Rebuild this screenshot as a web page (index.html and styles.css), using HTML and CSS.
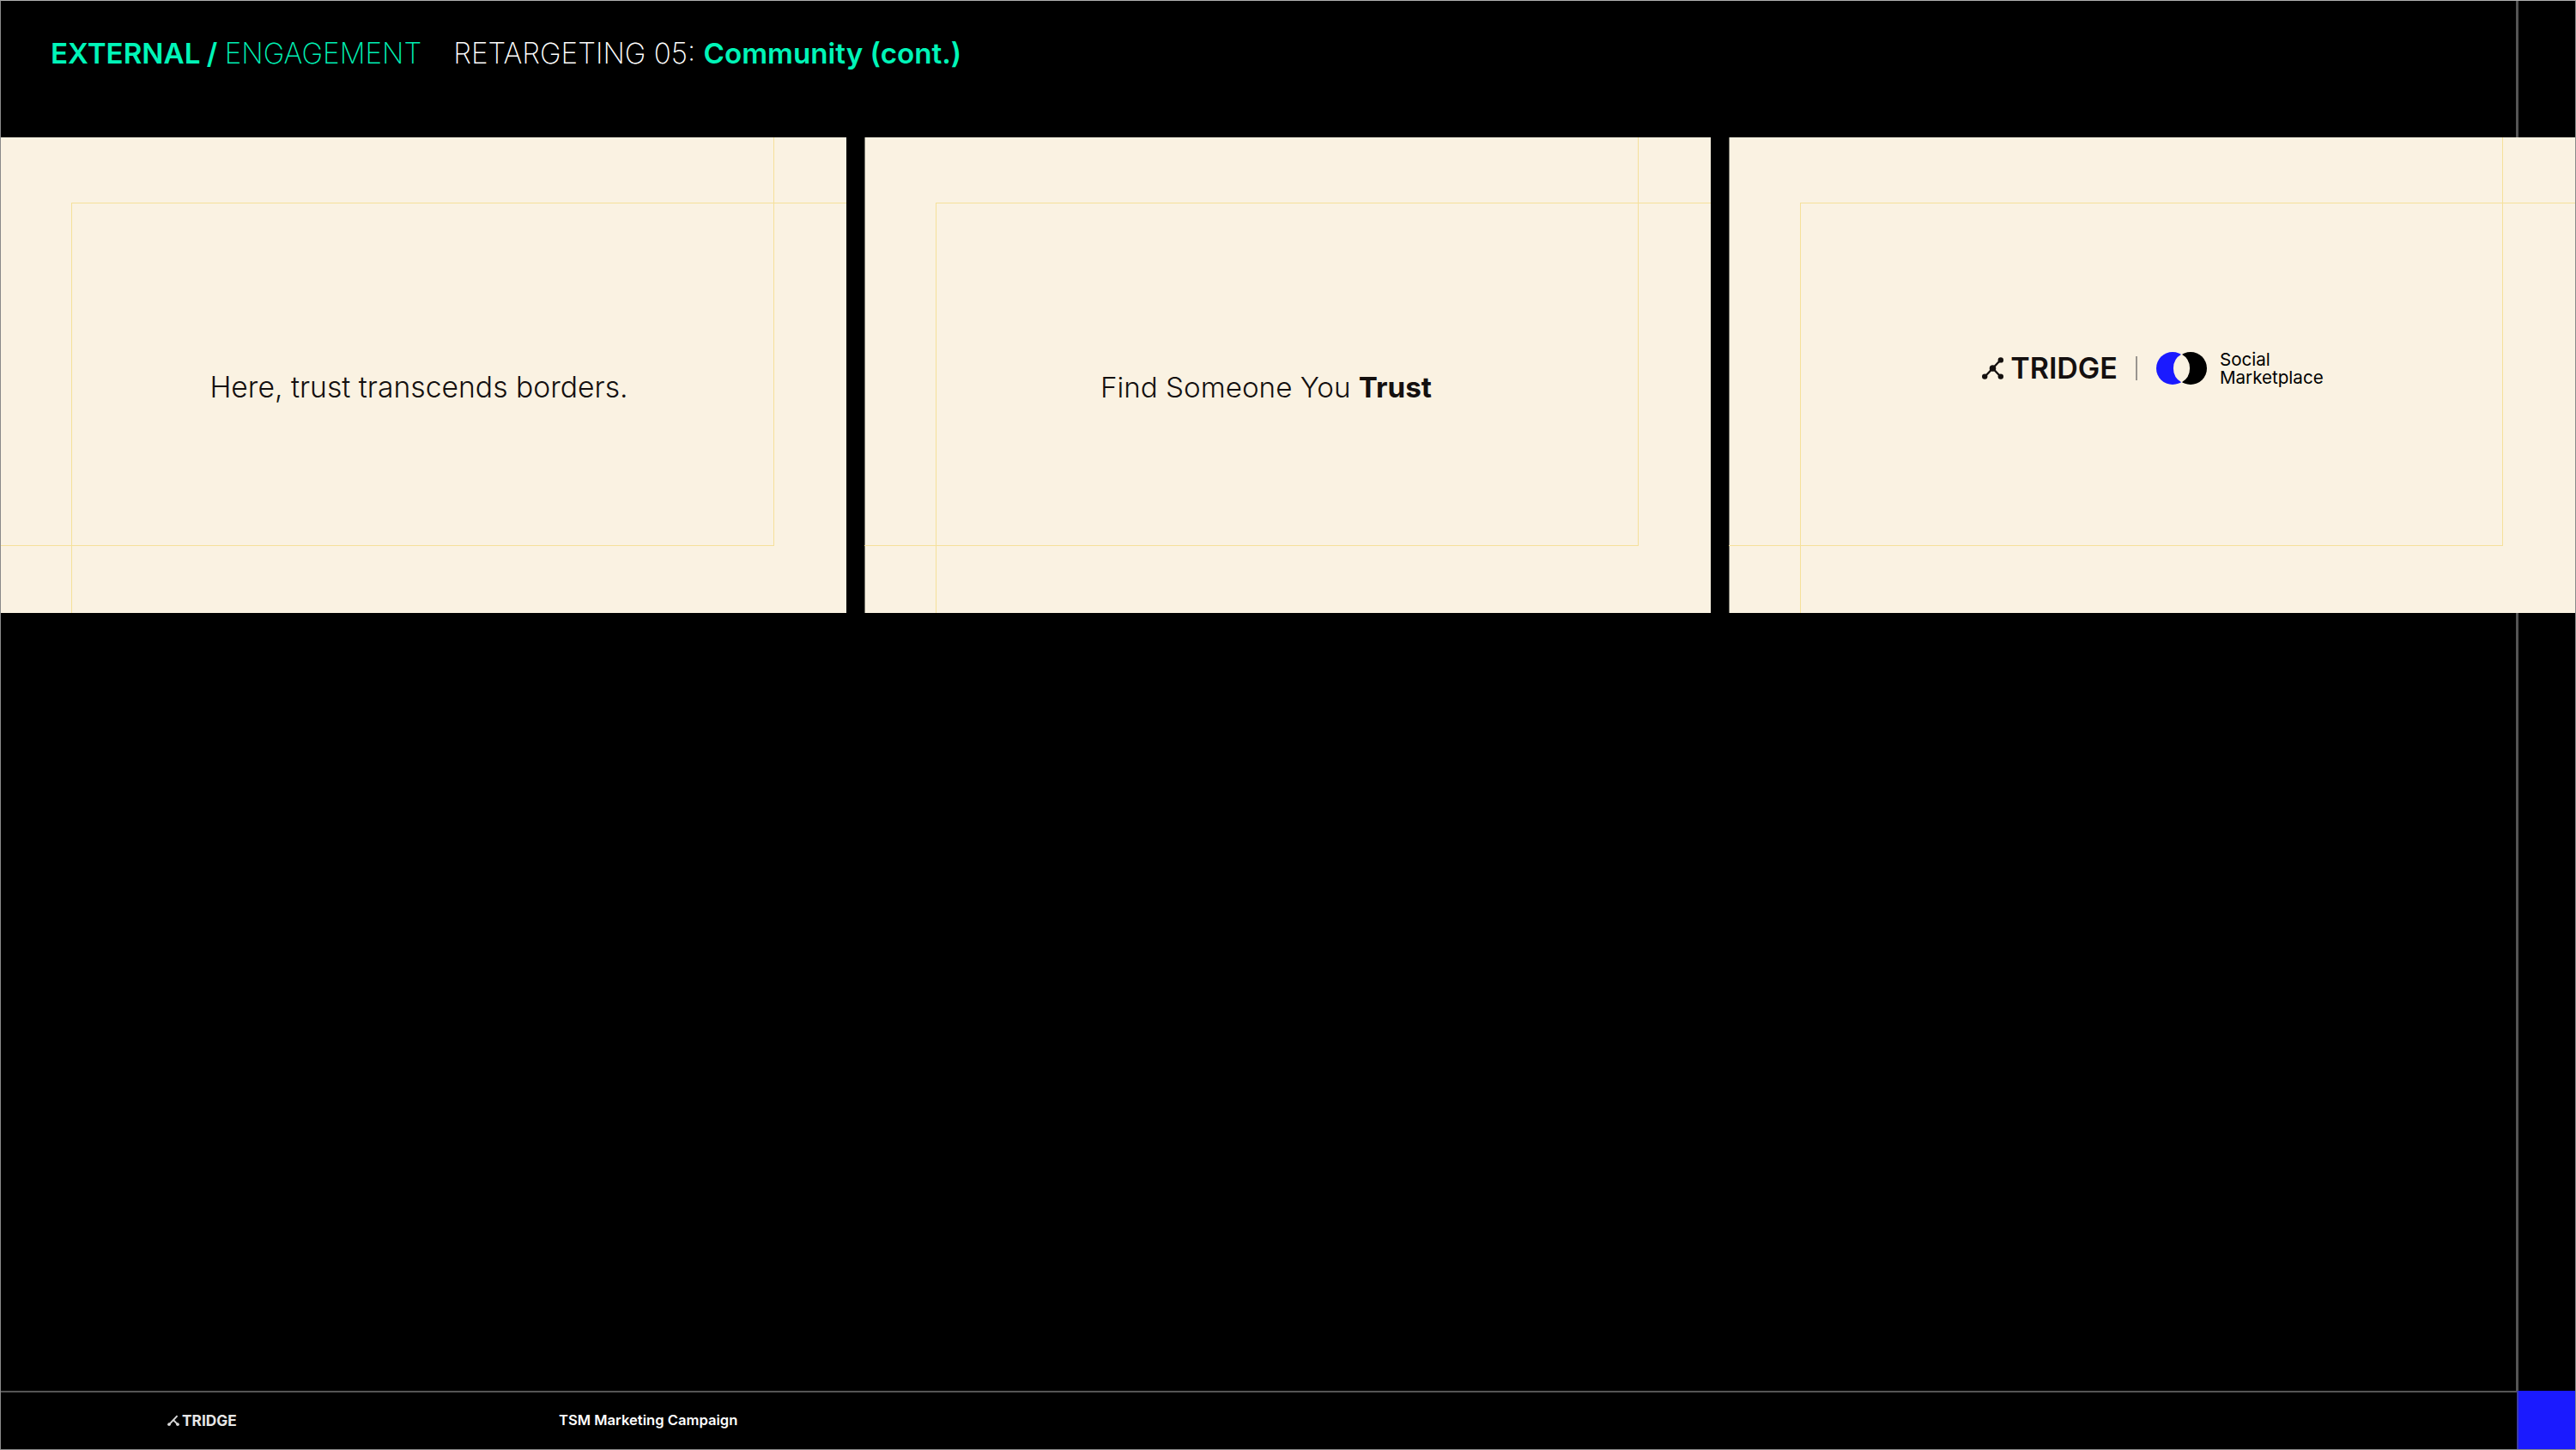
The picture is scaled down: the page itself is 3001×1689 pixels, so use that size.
FILE: index.html
```html
<!DOCTYPE html>
<html lang="en">
<head>
<meta charset="utf-8">
<title>TSM Marketing Campaign</title>
<link rel="stylesheet" href="styles.css">
</head>
<body>
<div class="page">
  <header class="head">
    <h1 class="title-group"><b>EXTERNAL /</b> <span class="thin-green">ENGAGEMENT</span></h1>
    <h2 class="title-sub"><span class="thin-white">RETARGETING 05:</span> <b>Community (cont.)</b></h2>
  </header>
  <main class="cards">
    <section class="card card-one">
      <i class="guide guide-top"></i><i class="guide guide-bottom"></i><i class="guide guide-left"></i><i class="guide guide-right"></i>
      <p class="line">Here, trust transcends borders.</p>
    </section>
    <section class="card card-two">
      <i class="guide guide-top"></i><i class="guide guide-bottom"></i><i class="guide guide-left"></i><i class="guide guide-right"></i>
      <p class="line">Find Someone You <b>Trust</b></p>
    </section>
    <section class="card card-three">
      <i class="guide guide-top"></i><i class="guide guide-bottom"></i><i class="guide guide-left"></i><i class="guide guide-right"></i>
      <div class="lockup">
        <svg class="mark" viewBox="0 0 25 26" aria-hidden="true">
          <path d="M4 22 L12.500 13 L21 4 M12.500 13 L21 22" fill="none" stroke="#14100f" stroke-width="2.400"/>
          <circle cx="3.200" cy="22.600" r="3.200" fill="#14100f"/><circle cx="12.500" cy="13" r="3.800" fill="#14100f"/>
          <circle cx="21.800" cy="3.400" r="3.200" fill="#14100f"/><circle cx="21.800" cy="22.600" r="3.200" fill="#14100f"/>
        </svg>
        <span class="wordmark">TRIDGE</span>
        <span class="divider"></span>
        <svg class="venn" viewBox="0 0 59 38" aria-hidden="true">
          <circle cx="19" cy="19" r="19" fill="#1a1aff"/>
          <circle cx="40" cy="19" r="19" fill="#000"/>
          <path d="M29.500 2.500 A19 19 0 0 1 29.500 35.500 A19 19 0 0 1 29.500 2.500 Z" fill="#faf2e2"/>
        </svg>
        <span class="sm-text">Social<br>Marketplace</span>
      </div>
    </section>
  </main>
  <footer class="foot">
    <div class="foot-logo">
      <svg class="foot-mark" viewBox="0 0 25 26" aria-hidden="true">
        <path d="M4 22 L12.500 13 L21 4 M12.500 13 L21 22" fill="none" stroke="#d8d8d8" stroke-width="3.400"/>
        <circle cx="3.200" cy="22.600" r="3.400" fill="#d8d8d8"/><circle cx="21.800" cy="22.600" r="3.400" fill="#d8d8d8"/>
      </svg>
      <span class="foot-word">TRIDGE</span>
    </div>
    <div class="foot-title">TSM Marketing Campaign</div>
    <div class="foot-square"></div>
  </footer>
  <div class="rail-line"></div>
  <div class="frame"></div>
</div>
</body>
</html>
```
FILE: styles.css
```css
* { box-sizing: border-box; }
html, body { margin: 0; padding: 0; background: #000; }
.page {
  position: relative;
  width: 3001px;
  height: 1689px;
  display: flex;
  flex-direction: column;
  overflow: hidden;
  background: #000;
  font-family: Inter, "Liberation Sans", sans-serif;
}
.head {
  height: 160px;
  flex: none;
  display: flex;
  align-items: flex-start;
  gap: 37px;
  padding: 42px 0 0 59px;
  font-size: 33.2px;
  line-height: 40px;
}
.title-group, .title-sub { margin: 0; font-size: inherit; font-weight: 400; white-space: nowrap; }
.title-group { word-spacing: -1px; }
.head b { font-weight: 640; color: #00f5b8; }
.thin-green { font-weight: 200; color: #00f0b4; }
.thin-white { font-weight: 180; color: #fff; }
.cards {
  position: relative;
  z-index: 1;
  flex: 1;
  display: flex;
  align-items: flex-start;
  gap: 21px;
}
.card {
  position: relative;
  flex: none;
  width: 986px;
  height: 554px;
  display: flex;
  align-items: center;
  justify-content: center;
  background: #faf2e2;
  box-shadow: inset 1px 0 0 #7a7a70;
}
.card-three { width: 987px; }
.guide { position: absolute; background: #f5e09a; }
.guide-top { left: 83px; right: 0; top: 76px; height: 1px; }
.guide-bottom { left: 0; width: 901px; top: 475px; height: 1px; }
.guide-left { left: 83px; top: 76px; bottom: 0; width: 1px; }
.guide-right { left: 901px; top: 0; width: 1px; height: 476px; }
.line {
  margin: 28px 0 0;
  font-size: 33.7px;
  line-height: 42px;
  font-weight: 270;
  color: #14100f;
  white-space: nowrap;
}
.line b { font-weight: 700; }
.card-one .line { margin-right: 10px; }
.card-two .line { margin-right: 50px; font-size: 33.2px; }
.lockup { display: flex; align-items: center; margin: 0 0 16px; color: #14100f; }
.mark { width: 25px; height: 26px; margin-right: 8px; margin-left: 1px; }
.wordmark { font-size: 34px; line-height: 38px; font-weight: 600; }
.divider { width: 2px; height: 28px; background: #99958f; margin: 0 22px 0 21px; }
.venn { width: 59px; height: 38px; margin-right: 15px; }
.sm-text { font-size: 20.6px; line-height: 21px; font-weight: 400; color: #000; }
.foot {
  position: relative;
  flex: none;
  height: 69px;
  display: flex;
  align-items: center;
  border-top: 2px solid #555;
  padding-bottom: 3px;
  color: #fff;
}
.foot-logo { display: flex; align-items: center; gap: 3px; margin-left: 195px; width: 456px; }
.foot-mark { width: 14px; height: 14px; }
.foot-word { font-size: 17.300px; font-weight: 700; color: #e6e6e6; }
.foot-title { font-size: 16.6px; font-weight: 600; flex: 1; white-space: nowrap; }
.foot-square { width: 69px; height: 69px; margin-top: -2px; margin-bottom: -3px; background: #1a1aff; border-left: 2px solid #3a3aa8; flex: none; }
.rail-line { position: absolute; left: 2931px; top: 0; height: 1620px; width: 3px; background: #555; }
.frame { position: absolute; inset: 0; border: 1px solid #8a8a8a; border-top-color: #b0b0b0; z-index: 2; pointer-events: none; }
```
